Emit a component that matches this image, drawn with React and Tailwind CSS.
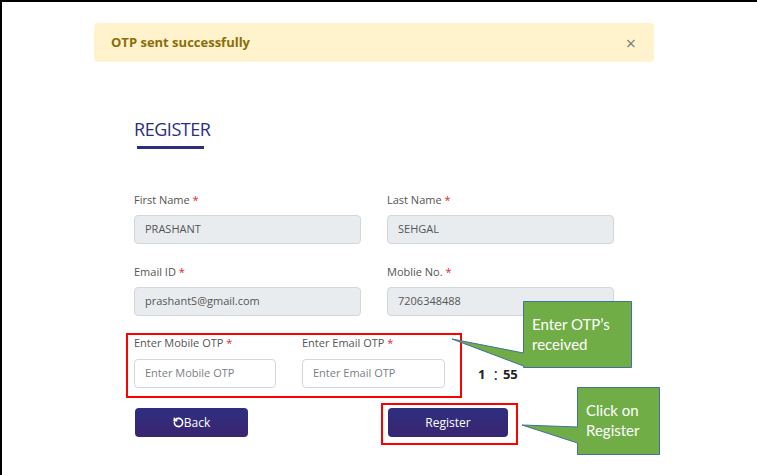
import { RotateCcw } from 'lucide-react'

const Label = ({ children }) => (
  <div className="text-[11px] leading-4 text-[#555]">
    {children} <span className="text-[#e3262d]">*</span>
  </div>
)

const ReadField = ({ label, value }) => (
  <div className="w-[227px]">
    <Label>{label}</Label>
    <div className="mt-[7px] h-[29px] flex items-center pl-[10px] bg-[#e9ecef] border border-[#d3d7dc] rounded text-[11px] text-[#555]">
      {value}
    </div>
  </div>
)

const OtpField = ({ label, placeholder, width }) => (
  <div className={width}>
    <Label>{label}</Label>
    <div className="mt-[8px] h-[29px] flex items-center pl-[10px] bg-white border border-[#d3d7dc] rounded text-[11px] text-[#7a7f85]">
      {placeholder}
    </div>
  </div>
)

const App = () => {
  return (
    <div className="relative w-[757px] h-[475px] bg-white overflow-hidden font-['Open_Sans',sans-serif]">
      <div className="h-full border-t-2 border-l-2 border-black">
        {/* Alert */}
        <div className="ml-[92px] mt-[21px] w-[560px] h-[39px] bg-[#fff3cd] rounded flex items-center justify-between pl-[17px] pr-[18px]">
          <span className="text-[13px] font-bold text-[#8a6d0b]">OTP sent successfully</span>
          <span className="text-[18px] text-[#7d7d7d] leading-none">×</span>
        </div>

        {/* Form */}
        <div className="ml-[132px] mt-[55px]">
          <div className="text-[18px] leading-[24px] text-[#2c2f7f] tracking-tight">REGISTER</div>
          <div className="ml-[3px] mt-[5px] w-[67px] h-[3px] bg-[#2b2d80]" />

          <div className="mt-[43px] flex gap-[26px]">
            <ReadField label="First Name" value="PRASHANT" />
            <ReadField label="Last Name" value="SEHGAL" />
          </div>
          <div className="mt-[20px] flex gap-[26px]">
            <ReadField label="Email ID" value="prashantS@gmail.com" />
            <ReadField label="Moblie No." value="7206348488" />
          </div>

          <div className="mt-[17px] flex items-start">
            <div className="-ml-[8px] w-[336px] border-2 border-[#ff0000] pl-[6px] pb-[8px] flex gap-[26px]">
              <OtpField label="Enter Mobile OTP" placeholder="Enter Mobile OTP" width="w-[142px]" />
              <OtpField label="Enter Email OTP" placeholder="Enter Email OTP" width="w-[143px]" />
            </div>
            <div className="ml-[16px] mt-[32px] flex items-center text-[13px] font-bold text-[#222] leading-[18px]">
              <span>1</span>
              <span className="ml-[8px] mr-[5px] text-[17px] font-normal">:</span>
              <span>55</span>
            </div>
          </div>

          <div className="mt-[5px] flex items-start">
            <button className="ml-[1px] mt-[5px] w-[113px] h-[29px] rounded bg-gradient-to-b from-[#2d2f80] to-[#3a2470] text-white text-[12px] flex items-center justify-center">
              <RotateCcw size={11} strokeWidth={3.5} />
              <span>Back</span>
            </button>
            <div className="ml-[133px] border-2 border-[#ff0000] pt-[3px] pl-[5px] pr-[8px] pb-[6px]">
              <button className="w-[120px] h-[29px] rounded bg-gradient-to-b from-[#2d2f80] to-[#3a2470] text-white text-[12px]">
                Register
              </button>
            </div>
          </div>
        </div>
      </div>

      {/* Callouts */}
      <svg className="absolute left-0 top-0 pointer-events-none" width="757" height="475">
        <path d="M523.5,301.5 H631.5 V367.5 H523.5 V366 L452,339 L523.5,353 Z" fill="#70ad47" stroke="#41719c" strokeWidth="1" />
        <path d="M577.5,387.5 H659.5 V454.5 H577.5 V443 L522,425 L577.5,427 Z" fill="#70ad47" stroke="#41719c" strokeWidth="1" />
      </svg>
      <div className="absolute left-[532px] top-[314px] text-white text-[15px] leading-[20px] font-['Lato',sans-serif]">
        <div>Enter OTP’s</div>
        <div>received</div>
      </div>
      <div className="absolute left-[586px] top-[400px] text-white text-[15px] leading-[20px] font-['Lato',sans-serif]">
        <div>Click on</div>
        <div>Register</div>
      </div>
    </div>
  )
}

export default App
